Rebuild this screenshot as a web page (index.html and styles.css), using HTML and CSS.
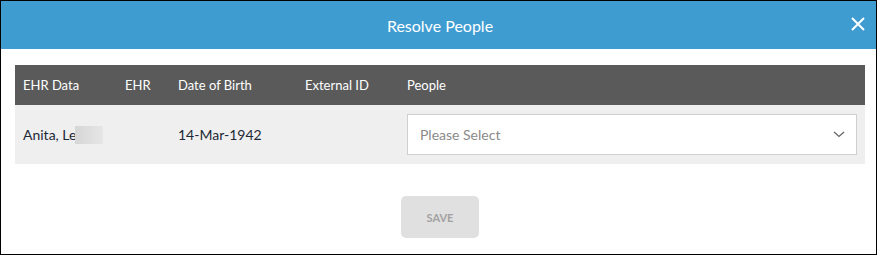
FILE: index.html
```html
<!DOCTYPE html>
<html>
<head>
<meta charset="utf-8">
<link rel="stylesheet" href="styles.css">
</head>
<body>
<div class="dialog">
  <header class="dialog-header">
    <h1 class="dialog-title">Resolve People</h1>
    <button class="close-btn" aria-label="Close">
      <svg width="14" height="14" viewBox="0 0 14 14"><path d="M1 1 L13 13 M13 1 L1 13" stroke="#fff" stroke-width="2" fill="none"/></svg>
    </button>
  </header>
  <div class="dialog-body">
    <div class="table">
      <div class="row head">
        <div class="cell c1">EHR Data</div>
        <div class="cell c2">EHR</div>
        <div class="cell c3">Date of Birth</div>
        <div class="cell c4">External ID</div>
        <div class="cell c5">People</div>
      </div>
      <div class="row data">
        <div class="cell c1">Anita, Le<span class="redact"></span></div>
        <div class="cell c2"></div>
        <div class="cell c3">14-Mar-1942</div>
        <div class="cell c4"></div>
        <div class="cell c5">
          <div class="select">
            <span class="placeholder">Please Select</span>
            <svg width="12" height="7" viewBox="0 0 12 7"><path d="M1 1 L6 5.5 L11 1" stroke="#666" stroke-width="1.3" fill="none"/></svg>
          </div>
        </div>
      </div>
    </div>
    <div class="actions">
      <button class="save-btn">SAVE</button>
    </div>
  </div>
</div>
</body>
</html>
```
FILE: styles.css
```css
* { box-sizing: border-box; }
html, body { margin: 0; padding: 0; background: #fff; }
body { font-family: Lato, "Noto Sans", sans-serif; }
.dialog {
  width: 877px;
  height: 255px;
  border: 1px solid #000;
  background: #fff;
  display: flex;
  flex-direction: column;
}
.dialog-header {
  height: 48px;
  background: #3e9cd1;
  display: flex;
  align-items: center;
  justify-content: center;
  position: relative;
}
.dialog-title {
  margin: 0;
  font-size: 16px;
  font-weight: 400;
  color: #fff;
  padding-left: 3px;
}
.close-btn {
  position: absolute;
  right: 11px;
  top: 16px;
  width: 14px;
  height: 14px;
  padding: 0;
  border: 0;
  background: none;
  display: flex;
}
.dialog-body {
  padding: 16px 11px 0 14px;
}
.table { display: flex; flex-direction: column; }
.row { display: flex; }
.row.head {
  height: 40px;
  background: #5a5a5a;
  color: #fff;
  font-size: 13px;
  align-items: center;
}
.row.data {
  height: 59px;
  background: #efefef;
  color: #1d2836;
  font-size: 14px;
  align-items: center;
}
.cell { padding: 0 8px; display: flex; align-items: center; }
.c1 { width: 102px; }
.c2 { width: 53px; }
.c3 { width: 127px; }
.c4 { width: 102px; }
.c5 { flex: 1; }
.redact {
  display: inline-block;
  width: 28px;
  height: 18px;
  background: linear-gradient(90deg, #d6d6d6, #e6e6e6);
  margin-left: -1px;
}
.select {
  width: 100%;
  height: 41px;
  background: #fff;
  border: 1px solid #cfcfcf;
  display: flex;
  align-items: center;
  justify-content: space-between;
  padding: 0 11px 0 12px;
}
.placeholder { color: #8a8a8a; font-size: 14px; }
.actions {
  display: flex;
  justify-content: center;
  padding-top: 32px;
}
.save-btn {
  width: 78px;
  height: 42px;
  border: 0;
  border-radius: 5px;
  background: #e0e0e0;
  color: #a2a2a2;
  font-family: Lato, "Noto Sans", sans-serif;
  font-weight: 700;
  font-size: 11px;
}
```
